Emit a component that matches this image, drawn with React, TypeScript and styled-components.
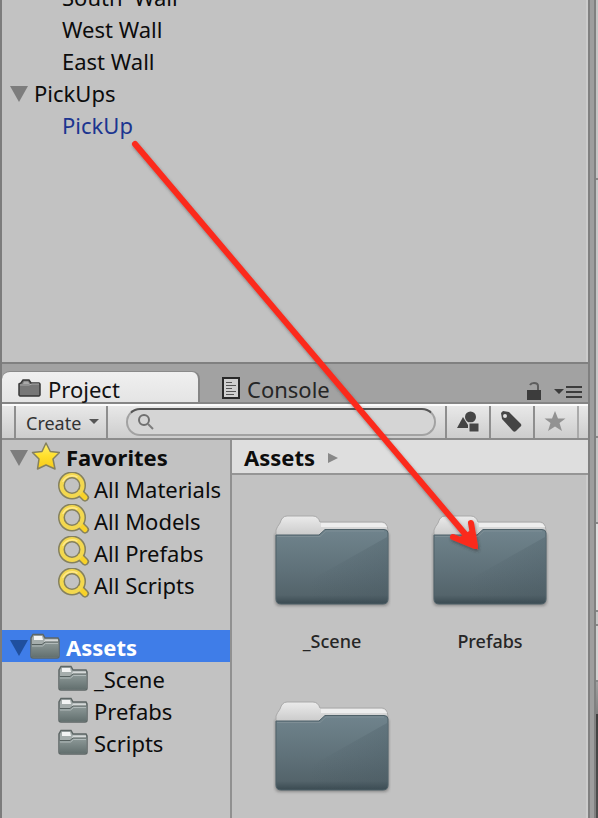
import React from "react";
import styled, { createGlobalStyle, css } from "styled-components";

const Global = createGlobalStyle`
  *, *::before, *::after { box-sizing: border-box; }
  html, body { margin: 0; background: #9c9c9c; }
  body, button, input { font-family: "Noto Sans", "Open Sans", sans-serif; }
  button { border: 0; padding: 0; background: none; color: inherit; }
  ul { list-style: none; margin: 0; padding: 0; }
`;

const Window = styled.div`
  position: relative;
  display: flex;
  height: 100vh;
  overflow: hidden;
  color: #0c0c0c;
`;

const Dock = styled.div`
  flex: 1;
  min-width: 0;
  display: flex;
  flex-direction: column;
  background: #a2a2a2;
  border-left: 2px solid #7c7c7c;
  border-right: 2px solid #808080;
`;

const Hierarchy = styled.section`
  overflow: hidden;
  background: #c2c2c2;
  border-bottom: 2px solid #808080;
  box-shadow: inset -2px 0 #cccccc;
`;

const HierarchyList = styled.ul`
  margin-top: -20px;
  padding-bottom: 222px;
`;

const RowButton = styled.button<{ $depth: number; $tone?: "link" | "selected"; $bold?: boolean }>`
  display: flex;
  align-items: center;
  width: 100%;
  height: 32px;
  padding-left: ${(p) => (p.$depth ? 56 : 6)}px;
  font-size: 22px;
  line-height: 32px;
  font-weight: ${(p) => (p.$bold ? 700 : 400)};
  text-align: left;
  white-space: pre;
  ${(p) => p.$tone === "link" && css`color: #1c3590;`}
  ${(p) => p.$tone === "selected" && css`color: #fff; background: #3f7de8;`}
`;

const RowText = styled.span<{ $gap?: number }>`
  padding-top: 2px;
  padding-left: ${(p) => p.$gap ?? 4}px;
`;

const Project = styled.section`
  flex: 1;
  min-height: 0;
  display: flex;
  flex-direction: column;
  padding-top: 7px;
`;

const TabBar = styled.div`
  display: flex;
  height: 33px;
  border-bottom: 2px solid #858585;
`;

const Tab = styled.button<{ $active?: boolean }>`
  display: flex;
  align-items: center;
  gap: 7px;
  width: 198px;
  padding: 4px 0 0 16px;
  font-size: 22px;
  line-height: 28px;
  color: #262626;
  ${(p) =>
    p.$active
      ? css`
          color: #111;
          border-radius: 8px 8px 0 0;
          border-right: 2px solid #858585;
          border-top: 1px solid #8a8a8a;
          background: linear-gradient(#f0f0f0, #e4e4e4);
        `
      : css`
          padding-top: 3px;
          padding-left: 22px;
        `}
`;

const TabLabel = styled.span`
  padding-top: 2px;
`;

const TabTools = styled.div`
  display: flex;
  align-items: center;
  gap: 12px;
  margin-left: auto;
  padding: 8px 6px 0 0;
`;

const IconButton = styled.button`
  display: flex;
`;

const Toolbar = styled.div`
  display: flex;
  height: 36px;
  border-top: 2px solid #fbfbfb;
  border-bottom: 2px solid #8c8c8c;
  background: linear-gradient(#e8e8e8, #cdcdcd);
  padding-left: 12px;
`;

const CreateButton = styled.button`
  display: flex;
  align-items: center;
  gap: 8px;
  width: 94px;
  padding: 2px 0 0 10px;
  border-left: 2px solid #8e8e8e;
  border-right: 2px solid #8e8e8e;
  font-size: 18px;
  line-height: 28px;
  color: #333;
`;

const SearchLabel = styled.label`
  flex: 1;
  display: flex;
  align-items: center;
  height: 28px;
  margin: 2px 9px 0 18px;
  padding-left: 10px;
  border: 2px solid #a2a2a2;
  border-top-color: #555;
  border-radius: 14px;
  background: #d5d5d5;
`;

const SearchInput = styled.input`
  flex: 1;
  min-width: 0;
  border: 0;
  outline: 0;
  background: none;
  font-size: 18px;
`;

const ToolButton = styled.button<{ $faint?: boolean }>`
  display: flex;
  align-items: center;
  justify-content: center;
  width: 44px;
  border-left: 2px solid #8e8e8e;
  color: ${(p) => (p.$faint ? "#929292" : "#454545")};
`;

const ToolEnd = styled.div`
  width: 11px;
  border-left: 2px solid #aaa;
`;

const Body = styled.div`
  flex: 1;
  min-height: 0;
  display: flex;
  background: #c2c2c2;
`;

const Tree = styled.nav`
  display: flex;
  flex-direction: column;
  gap: 30px;
  width: 230px;
  flex-shrink: 0;
  border-right: 2px solid #909090;
`;

const Browser = styled.div`
  flex: 1;
  min-width: 0;
  overflow: hidden;
  box-shadow: inset -2px 0 #cccccc;
`;

const Breadcrumb = styled.div`
  display: flex;
  align-items: center;
  gap: 13px;
  height: 35px;
  padding: 2px 0 0 12px;
  background: #dedede;
  border-bottom: 2px solid #959595;
  font-size: 22px;
  font-weight: 700;
  line-height: 31px;
`;

const FolderGrid = styled.div`
  display: grid;
  grid-template-columns: repeat(auto-fill, 158px);
  grid-auto-rows: 186px;
  padding: 37px 0 0 21px;
`;

const FolderTile = styled.button`
  display: flex;
  flex-direction: column;
  align-items: center;
  gap: 20px;
  font-size: 18px;
  line-height: 24px;
  font-weight: 500;
  color: #262626;
`;

const Divider = styled.div`
  width: 6px;
  background: #9e9e9e;
  border-right: 2px solid #808080;
`;

const Neighbour = styled.div`
  width: 2px;
  display: flex;
  flex-direction: column;
`;

const Slice = styled.div<{ $h: number; $bg: string }>`
  height: ${(p) => p.$h}px;
  background: ${(p) => p.$bg};
  border-bottom: 2px solid #888;
`;

const SliceRest = styled.div`
  flex: 1;
  background: linear-gradient(#a0a0a0, #808080 32px, #404040 32px, #505050);
`;

const Overlay = styled.svg`
  position: absolute;
  left: 0;
  top: 0;
  pointer-events: none;
`;

const Foldout = ({ selected }: { selected?: boolean }) => (
  <svg width="22" height="32" viewBox="0 0 22 32" aria-hidden="true">
    <path d="M2 10H20L11 26Z" fill={selected ? "#1f4f9e" : "#7d7d7d"} />
  </svg>
);

const FavoriteStar = () => (
  <svg width="30" height="32" viewBox="0 0 30 32" aria-hidden="true">
    <defs>
      <linearGradient id="gold" x1="0" y1="0" x2="0" y2="1">
        <stop offset="0" stopColor="#fff173" />
        <stop offset="0.5" stopColor="#ffe02c" />
        <stop offset="1" stopColor="#f6c91a" />
      </linearGradient>
    </defs>
    <path d="M17.500 3L21.800 11.500L31 12.500L24.500 19L26.500 29L17.500 25L9 29L10.500 19L4 12.500L13.500 11.500Z" transform="translate(-1.500 0)" fill="url(#gold)" stroke="#84805f" strokeWidth="1.500" strokeLinejoin="round" />
  </svg>
);

const YellowSearch = () => (
  <svg width="32" height="32" viewBox="0 0 32 32" aria-hidden="true">
    <g fill="none" strokeLinecap="round">
      <path d="M23 21.500L27 25.500" stroke="#85815e" strokeWidth="8" />
      <circle cx="14" cy="13.500" r="10.500" stroke="#85815e" strokeWidth="7" />
      <path d="M22 20.500L27 25.500" stroke="#f8d229" strokeWidth="5" />
      <circle cx="14" cy="13.500" r="10.500" stroke="#f3d84f" strokeWidth="4" />
      <path d="M5 9.500A10 10 0 0 1 19 5" stroke="#ffe98c" strokeWidth="1.500" />
    </g>
  </svg>
);

const SmallFolder = () => (
  <svg width="30" height="26" viewBox="0 0 30 26" aria-hidden="true">
    <defs>
      <linearGradient id="small" x1="0" y1="0" x2="0" y2="1">
        <stop offset="0" stopColor="#8d9998" />
        <stop offset="1" stopColor="#626f6e" />
      </linearGradient>
    </defs>
    <path d="M1 23V5L3 1.500H13L15 5H28L29 7V23Q29 25 27 25H3Q1 25 1 23Z" fill="#a5adac" stroke="#5d6665" strokeWidth="1.500" />
    <path d="M4 3H12L13 7H4Z" fill="#f3f4f4" />
    <path d="M15 6.500H28V9H14Z" fill="#d5d9d9" />
    <path d="M1.500 12H12L15 9.500H28.500V23Q28.500 24.500 27 24.500H3Q1.500 24.500 1.500 23Z" fill="url(#small)" />
    <path d="M2 11.500H12L15 9H28" stroke="#56605f" fill="none" />
    <path d="M2 13H12.500L15.500 10.500H28" stroke="#b1baba" fill="none" />
  </svg>
);

const LargeFolder = () => (
  <svg width="118" height="97" viewBox="0 0 118 97" aria-hidden="true">
    <defs>
      <linearGradient id="tab" x1="0" y1="0" x2="0" y2="1">
        <stop offset="0" stopColor="#ebebeb" />
        <stop offset="1" stopColor="#c6c6c6" />
      </linearGradient>
      <linearGradient id="front" x1="0" y1="0" x2="0" y2="1">
        <stop offset="0" stopColor="#70848d" />
        <stop offset="0.550" stopColor="#5f7179" />
        <stop offset="0.880" stopColor="#54646b" />
        <stop offset="1" stopColor="#3a4a51" />
      </linearGradient>
      <linearGradient id="shade" x1="0" y1="0" x2="1" y2="0">
        <stop offset="0.300" stopColor="#42535c" stopOpacity="0" />
        <stop offset="1" stopColor="#42535c" stopOpacity="0.250" />
      </linearGradient>
      <filter id="soft" x="-10%" y="-10%" width="120%" height="125%">
        <feGaussianBlur stdDeviation="1.500" />
      </filter>
    </defs>
    <path d="M2 22H116V89Q116 94 111 94H7Q2 94 2 89Z" fill="#666" opacity="0.600" filter="url(#soft)" />
    <path d="M3 26V18Q4 15 7 11Q9 4 14 4H40Q45 4 47 10H109Q114 10 115 18V26H3Z" fill="url(#tab)" stroke="#a9a9a9" />
    <path d="M48 11H109Q113 12 114 15H48Z" fill="#eee" />
    <path d="M3 23H46L52 17.500H111Q115 17.500 115 21V87Q115 92 110 92H8Q3 92 3 87Z" fill="url(#front)" stroke="#4f6169" />
    <path d="M114 25V87Q114 91 110 91H8Q4 91 4 87Z" fill="url(#shade)" />
    <path d="M4 24.500H47L53 19H111" stroke="#7e8e95" fill="none" />
  </svg>
);

const TabFolder = () => (
  <svg width="23" height="20" viewBox="0 0 23 20" aria-hidden="true">
    <path d="M1 5L3 4L5 1H11L13 4H21L22 5V16L21 17H2L1 16Z" fill="#777" stroke="#393939" strokeWidth="1.500" />
    <path d="M2 6H11L14 5H21" stroke="#aaa" fill="none" />
    <path d="M6 2.500H10L11.500 5H5Z" fill="#a9a9a9" />
  </svg>
);

const ConsoleIcon = () => (
  <svg width="18" height="22" viewBox="0 0 18 22" aria-hidden="true">
    <path d="M1 1H17V21H1Z" fill="#d0d0d0" stroke="#292929" strokeWidth="2" />
    <path d="M4 5.500H10M4 8.500H14M4 11.500H10M4 14.500H14M4 17.500H12" stroke="#555" strokeWidth="1" />
  </svg>
);

const folders = ["_Scene", "Prefabs", "Scripts"];
const searches = ["All Materials", "All Models", "All Prefabs", "All Scripts"];

export default function App() {
  return (
    <>
      <Global />
      <Window>
        <Dock>
          <Hierarchy aria-label="Hierarchy">
            <HierarchyList>
              {["South  Wall", "West Wall", "East Wall"].map((name) => (
                <li key={name}>
                  <RowButton $depth={1}><RowText>{name}</RowText></RowButton>
                </li>
              ))}
              <li>
                <RowButton $depth={0}><Foldout /><RowText>PickUps</RowText></RowButton>
                <RowButton $depth={1} $tone="link"><RowText>PickUp</RowText></RowButton>
              </li>
            </HierarchyList>
          </Hierarchy>

          <Project aria-label="Project">
            <TabBar>
              <Tab $active><TabFolder />Project</Tab>
              <Tab><ConsoleIcon /><TabLabel>Console</TabLabel></Tab>
              <TabTools>
                <IconButton aria-label="Lock">
                  <svg width="16" height="20" viewBox="0 0 16 20" aria-hidden="true">
                    <path d="M1 9H15V19H1Z" fill="#3c3c3c" />
                    <path d="M4 4Q5 2 8 2Q12 2 12 5V9" fill="none" stroke="#5e5e5e" strokeWidth="2" />
                  </svg>
                </IconButton>
                <IconButton aria-label="Panel menu">
                  <svg width="28" height="14" viewBox="0 0 28 14" aria-hidden="true">
                    <path d="M0 5H10L5 10ZM12 2H28V4H12ZM12 7H28V9H12ZM12 12H28V14H12Z" fill="#3c3c3c" />
                  </svg>
                </IconButton>
              </TabTools>
            </TabBar>

            <Toolbar>
              <CreateButton>
                Create
                <svg width="10" height="14" viewBox="0 0 10 14" aria-hidden="true">
                  <path d="M0 3H10L5 8Z" fill="#555" />
                </svg>
              </CreateButton>
              <SearchLabel>
                <svg width="16" height="18" viewBox="0 0 16 18" aria-hidden="true">
                  <circle cx="6" cy="7" r="5" fill="none" stroke="#6f6f6f" strokeWidth="2" />
                  <path d="M10 11L15 16" stroke="#7c7c7c" strokeWidth="2" />
                </svg>
                <SearchInput aria-label="Search assets" />
              </SearchLabel>
              <ToolButton aria-label="Search by type">
                <svg width="24" height="24" viewBox="0 0 24 24" fill="currentColor" aria-hidden="true">
                  <path d="M1 18L7 7L12 15V18Z" />
                  <circle cx="14.500" cy="7" r="5.500" />
                  <path d="M13 13H23V22H13Z" stroke="#d9d9d9" strokeWidth="1" />
                </svg>
              </ToolButton>
              <ToolButton aria-label="Search by label">
                <svg width="24" height="24" viewBox="0 0 24 24" fill="currentColor" aria-hidden="true">
                  <path fillRule="evenodd" d="M1 3L3 1L9 2L21 14Q22 16 20 17L16 21Q14 23 12 20L2 9ZM5 4A2 2 0 1 0 5 8A2 2 0 1 0 5 4Z" />
                </svg>
              </ToolButton>
              <ToolButton $faint aria-label="Save search">
                <svg width="24" height="24" viewBox="0 0 24 24" fill="currentColor" aria-hidden="true">
                  <path d="M11 1L14 8.500H21.500L15.500 13L18 21L11 16.500L4 21L6.500 13L0.500 8.500H8Z" />
                </svg>
              </ToolButton>
              <ToolEnd />
            </Toolbar>

            <Body>
              <Tree aria-label="Project folders">
                <div>
                  <RowButton $depth={0} $bold><Foldout /><FavoriteStar /><RowText $gap={6}>Favorites</RowText></RowButton>
                  {searches.map((name) => (
                    <RowButton key={name} $depth={1}><YellowSearch /><RowText>{name}</RowText></RowButton>
                  ))}
                </div>
                <div>
                  <RowButton $depth={0} $bold $tone="selected"><Foldout selected /><SmallFolder /><RowText $gap={6}>Assets</RowText></RowButton>
                  {folders.map((name) => (
                    <RowButton key={name} $depth={1}><SmallFolder /><RowText $gap={6}>{name}</RowText></RowButton>
                  ))}
                </div>
              </Tree>
              <Browser>
                <Breadcrumb>
                  Assets
                  <svg width="10" height="12" viewBox="0 0 10 12" aria-hidden="true">
                    <path d="M0 1L10 6L0 11Z" fill="#888" />
                  </svg>
                </Breadcrumb>
                <FolderGrid>
                  {folders.map((name) => (
                    <FolderTile key={name}><LargeFolder />{name}</FolderTile>
                  ))}
                </FolderGrid>
              </Browser>
            </Body>
          </Project>
        </Dock>
        <Divider />
        <Neighbour>
          <Slice $h={180} $bg="#c6c6c6" />
          <Slice $h={258} $bg="#c8c8c8" />
          <Slice $h={86} $bg="#c6c6c6" />
          <Slice $h={88} $bg="#e0e0e0" />
          <Slice $h={14} $bg="#c8c8c8" />
          <Slice $h={56} $bg="#d2d2d2" />
          <SliceRest />
        </Neighbour>
        <Overlay width="598" height="818" viewBox="0 0 598 818" aria-hidden="true">
          <defs>
            <filter id="arrowShadow" x="-5%" y="-5%" width="110%" height="110%">
              <feDropShadow dx="1" dy="2" stdDeviation="1.500" floodColor="#333" floodOpacity="0.500" />
            </filter>
          </defs>
          <g fill="none" stroke="#fb2b1c" strokeLinecap="round" filter="url(#arrowShadow)">
            <path d="M135 144L471 541" strokeWidth="6" />
            <path d="M471 523L475 546L453 537" strokeWidth="6" strokeLinejoin="round" />
            <path d="M469 533L475 546L461 538Z" fill="#fb2b1c" strokeWidth="3" />
          </g>
        </Overlay>
      </Window>
    </>
  );
}
